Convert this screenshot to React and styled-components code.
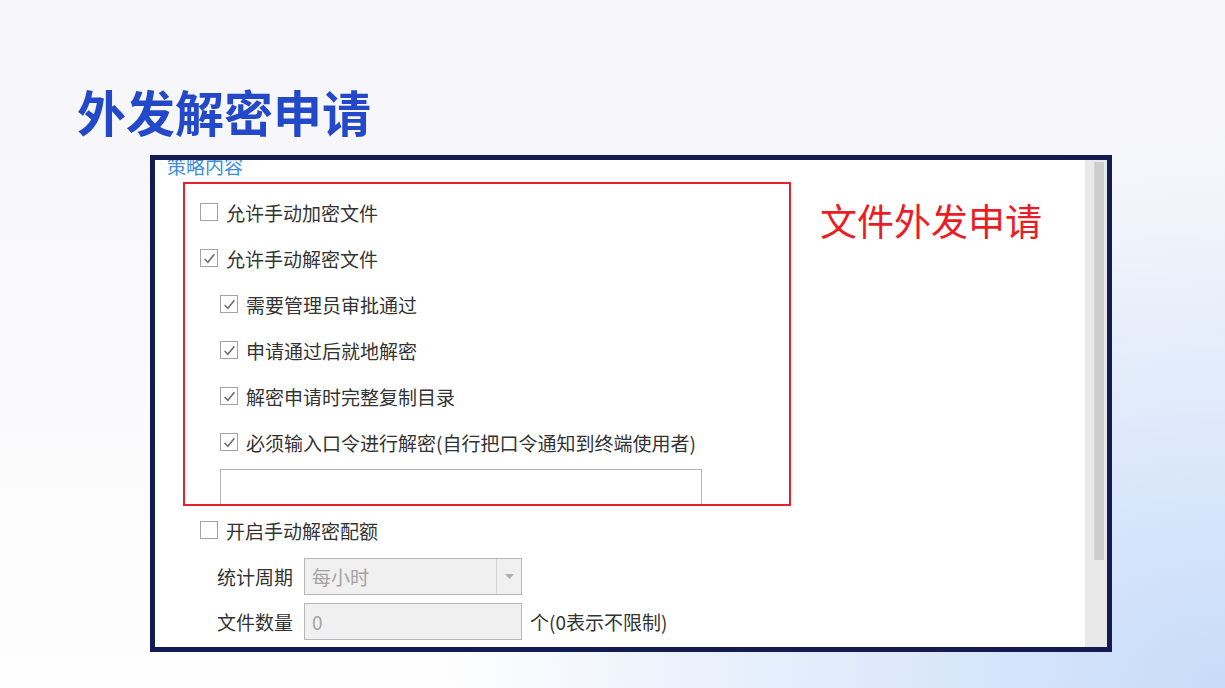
import styled, { createGlobalStyle } from "styled-components";

const GlobalStyle = createGlobalStyle`
  html, body {
    margin: 0;
    padding: 0;
  }
  body {
    font-family: "Noto Sans CJK SC", "Noto Sans", sans-serif;
  }
`;

const Slide = styled.div`
  width: 1225px;
  height: 688px;
  overflow: hidden;
  box-sizing: border-box;
  padding-top: 83px;
  background:
    radial-gradient(ellipse 75% 95% at 100% 100%, #c7dbf9 0%, rgba(203, 222, 250, 0.55) 45%, rgba(220, 230, 250, 0) 85%),
    linear-gradient(180deg, #f6f6fa 0%, #f9f9fb 45%, #fefefe 100%);
`;

const Title = styled.h1`
  margin: 0 0 16px 77px;
  font-size: 49px;
  line-height: 56px;
  font-weight: 700;
  color: #2349c9;
`;

const Panel = styled.div`
  margin-left: 150px;
  width: 962px;
  height: 497px;
  box-sizing: border-box;
  border: 5px solid #141b52;
  display: flex;
  background: #fff;
`;

const Content = styled.div`
  flex: 1;
  overflow: hidden;
  padding-left: 12px;
`;

const Track = styled.div`
  width: 22px;
  background: #e9e9e9;
  display: flex;
  flex-direction: column;
`;

const Thumb = styled.div`
  margin: 2px 3px 0 9px;
  height: 398px;
  background: #cdcdcd;
  border-left: 1px solid #d6d6d6;
`;

const Heading = styled.div`
  margin-top: -5px;
  font-size: 19px;
  line-height: 22px;
  color: #3b8ed9;
`;

const Body = styled.div`
  display: flex;
  align-items: flex-start;
  padding-left: 16px;
  margin-top: 5px;
`;

const Form = styled.div`
  display: flex;
  flex-direction: column;
  width: 608px;
`;

const Group = styled.div`
  height: 324px;
  box-sizing: border-box;
  border: 2px solid #e8202a;
  overflow: hidden;
  padding: 5px 0 0 15px;
`;

const Row = styled.div`
  display: flex;
  align-items: center;
  height: 46px;
  padding-left: ${({ $indent }) => ($indent ? "20px" : "0")};
  font-size: 19px;
  color: #333;
  white-space: nowrap;
`;

const Box = styled.span`
  width: 18px;
  height: 18px;
  box-sizing: border-box;
  border: 1.5px solid #a3a3a3;
  background: #fff;
  margin-right: 8px;
  display: flex;
  align-items: center;
  justify-content: center;
  flex-shrink: 0;
`;

const TextBox = styled.div`
  margin: 4px 0 0 20px;
  width: 482px;
  height: 40px;
  box-sizing: border-box;
  border: 1px solid #b3b3b3;
  background: #fff;
`;

const Below = styled.div`
  padding-left: 17px;
  margin-top: 1px;
`;

const Field = styled.div`
  display: flex;
  align-items: center;
  height: 37px;
  margin-top: ${({ $gap }) => $gap}px;
  padding-left: 34px;
  font-size: 19px;
  color: #333;
`;

const Label = styled.span`
  width: 87px;
  flex-shrink: 0;
`;

const Input = styled.div`
  width: 218px;
  height: 37px;
  box-sizing: border-box;
  border: 1px solid #b7b7b7;
  background: #f0f0f0;
  display: flex;
  align-items: center;
  color: #a3a3a3;
  font-size: 19px;
  padding-left: 7px;
`;

const Value = styled.span`
  flex: 1;
`;

const Arrow = styled.span`
  width: 24px;
  align-self: stretch;
  border-left: 1px solid #d2d2d2;
  display: flex;
  align-items: center;
  justify-content: center;
`;

const Hint = styled.span`
  margin-left: 8px;
`;

const Note = styled.div`
  margin: 16px 0 0 29px;
  font-size: 37px;
  line-height: 44px;
  color: #ec1c24;
  white-space: nowrap;
`;

const Check = ({ checked }) => (
  <Box>
    {checked && (
      <svg width="13" height="13" viewBox="0 0 12 12">
        <polyline
          points="1.5,6.5 4.5,9.5 10.5,2"
          fill="none"
          stroke="#707070"
          strokeWidth="1.5"
        />
      </svg>
    )}
  </Box>
);

const options = [
  { text: "允许手动加密文件", checked: false },
  { text: "允许手动解密文件", checked: true },
  { text: "需要管理员审批通过", checked: true, indent: true },
  { text: "申请通过后就地解密", checked: true, indent: true },
  { text: "解密申请时完整复制目录", checked: true, indent: true },
  { text: "必须输入口令进行解密(自行把口令通知到终端使用者)", checked: true, indent: true },
];

const App = () => {
  return (
    <Slide>
      <GlobalStyle />
      <Title>外发解密申请</Title>
      <Panel>
        <Content>
          <Heading>策略内容</Heading>
          <Body>
            <Form>
              <Group>
                {options.map((o) => (
                  <Row key={o.text} $indent={o.indent}>
                    <Check checked={o.checked} />
                    {o.text}
                  </Row>
                ))}
                <TextBox />
              </Group>
              <Below>
                <Row>
                  <Check checked={false} />
                  开启手动解密配额
                </Row>
              </Below>
              <Field $gap={5}>
                <Label>统计周期</Label>
                <Input>
                  <Value>每小时</Value>
                  <Arrow>
                    <svg width="9" height="5" viewBox="0 0 9 5">
                      <polygon points="0,0 9,0 4.5,5" fill="#b0b0b0" />
                    </svg>
                  </Arrow>
                </Input>
              </Field>
              <Field $gap={8}>
                <Label>文件数量</Label>
                <Input>
                  <Value>0</Value>
                </Input>
                <Hint>个(0表示不限制)</Hint>
              </Field>
            </Form>
            <Note>文件外发申请</Note>
          </Body>
        </Content>
        <Track>
          <Thumb />
        </Track>
      </Panel>
    </Slide>
  );
};

export default App;
